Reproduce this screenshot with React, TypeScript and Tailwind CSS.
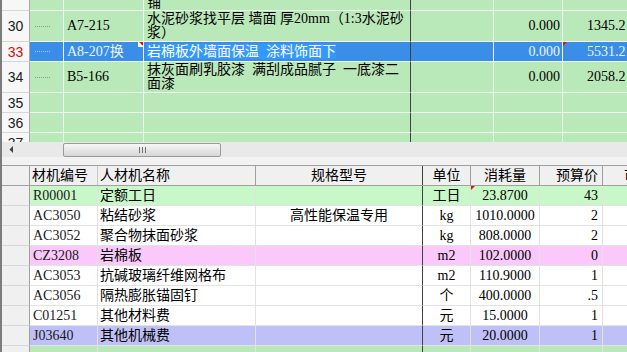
import React from 'react';

const SERIF = "font-['Liberation_Serif','Noto_Sans_CJK_SC',serif]";
const SANS = "font-['Liberation_Sans',Arial,sans-serif]";

type TopRow = {
  num?: string;
  h: string;
  code?: string;
  name?: string[];
  v1?: string;
  v2?: string;
  sel?: boolean;
  tree?: boolean;
  partialTop?: boolean;
};

const topRows: TopRow[] = [
  { h: 'h-[11px]', name: ['铺'], partialTop: true },
  { num: '30', h: 'h-[31px]', code: 'A7-215', name: ['水泥砂浆找平层\u2005墙面\u2005厚20mm（1:3水泥砂', '浆）'], v1: '0.000', v2: '1345.2', tree: true },
  { num: '33', h: 'h-[20px]', code: 'A8-207换', name: ['岩棉板外墙面保温\u2002涂料饰面下'], v1: '0.000', v2: '5531.2', sel: true, tree: true },
  { num: '34', h: 'h-[31px]', code: 'B5-166', name: ['抹灰面刷乳胶漆\u2002满刮成品腻子\u2002一底漆二', '面漆'], v1: '0.000', v2: '2058.2', tree: true },
  { num: '35', h: 'h-[20px]' },
  { num: '36', h: 'h-[20px]' },
  { num: '37', h: 'h-[20px]' },
];

type BotRow = {
  code?: string;
  name?: string;
  spec?: string;
  unit?: string;
  qty?: string;
  price?: string;
  bg: string;
  marker?: boolean;
};

const botRows: BotRow[] = [
  { code: 'R00001', name: '定额工日', unit: '工日', qty: '23.8700', price: '43', bg: 'bg-[#c8f8c8]', marker: true },
  { code: 'AC3050', name: '粘结砂浆', spec: '高性能保温专用', unit: 'kg', qty: '1010.0000', price: '2', bg: 'bg-white' },
  { code: 'AC3052', name: '聚合物抹面砂浆', unit: 'kg', qty: '808.0000', price: '2', bg: 'bg-white' },
  { code: 'CZ3208', name: '岩棉板', unit: 'm2', qty: '102.0000', price: '0', bg: 'bg-[#fac8fa]' },
  { code: 'AC3053', name: '抗碱玻璃纤维网格布', unit: 'm2', qty: '110.9000', price: '1', bg: 'bg-white' },
  { code: 'AC3056', name: '隔热膨胀锚固钉', unit: '个', qty: '400.0000', price: '.5', bg: 'bg-white' },
  { code: 'C01251', name: '其他材料费', unit: '元', qty: '15.0000', price: '1', bg: 'bg-white' },
  { code: 'J03640', name: '其他机械费', unit: '元', qty: '20.0000', price: '1', bg: 'bg-[#c0c0f8]' },
  { bg: 'bg-[#b9e8b9]' },
];

function RedMarkRight() {
  return (
    <svg className="absolute top-0 right-0" width="5" height="5" viewBox="0 0 5 5">
      <rect x="0" y="0" width="5" height="5" fill="#ffffff" />
      <polygon points="1,0 5,0 5,4" fill="#e01010" />
    </svg>
  );
}

function RedMarkLeft() {
  return (
    <svg className="absolute top-0 left-0" width="5" height="5" viewBox="0 0 5 5">
      <polygon points="0,0 4,0 0,4" fill="#e01010" />
    </svg>
  );
}

function TopGrid() {
  return (
    <div className="h-[142px] shrink-0 overflow-hidden bg-[#b9e8b9] flex flex-col">
      {topRows.map((r, i) => {
        const selBg = r.sel ? 'bg-[#3a8ee8]' : '';
        const txt = r.sel ? 'text-[#eef4ff]' : 'text-black';
        return (
          <div key={i} className={`flex shrink-0 ${r.h}`}>
            <div
              className={`w-[28px] shrink-0 border-r border-r-[#a8a8a8] border-b border-b-[#d6d6d6] bg-[#f7f7f7] flex items-center justify-center text-[14px] leading-[16px] ${SANS} ${r.sel ? 'text-[#d01010]' : 'text-[#202020]'}`}
            >
              {r.num}
            </div>
            <div className={`w-[34px] shrink-0 border-r border-b border-[#eef8ee] flex items-center ${selBg}`}>
              {r.tree && (
                <div className={`ml-[5px] w-[15px] border-t border-dotted ${r.sel ? 'border-[#a8c8f0]' : 'border-[#8a9a8a]'}`} />
              )}
            </div>
            <div className={`relative w-[80px] shrink-0 border-r border-b border-[#eef8ee] flex items-center pl-[3px] text-[14px] leading-[16px] whitespace-nowrap ${SERIF} ${txt} ${selBg}`}>
              {r.code}
              {r.sel && <RedMarkRight />}
            </div>
            <div
              className={`w-[267px] shrink-0 border-r border-r-[#404040] border-b border-b-[#eef8ee] overflow-hidden pl-[3px] text-[14px] leading-[14px] whitespace-nowrap ${SERIF} ${selBg} flex flex-col ${
                r.partialTop ? 'justify-end' : r.name && r.name.length > 1 ? 'justify-start pt-[1px]' : 'justify-center'
              }`}
            >
              {r.name &&
                r.name.map((l, j) => (
                  <div key={j} className="shrink-0">
                    {r.sel ? <span className="bg-[#3399ff] text-white">{l}</span> : <span className="text-black">{l}</span>}
                  </div>
                ))}
            </div>
            <div className={`w-[83px] shrink-0 border-r border-b border-[#eef8ee] ${selBg}`} />
            <div className={`w-[69px] shrink-0 border-r border-b border-[#eef8ee] flex items-center justify-end pr-[2px] text-[14px] leading-[16px] ${SERIF} ${txt} ${selBg}`}>
              {r.v1}
            </div>
            <div className={`relative flex-1 border-b border-[#eef8ee] flex items-center pl-[24px] text-[14px] leading-[16px] whitespace-nowrap overflow-hidden ${SERIF} ${txt} ${selBg}`}>
              {r.v2}
              {r.sel && <RedMarkLeft />}
            </div>
          </div>
        );
      })}
    </div>
  );
}

function ScrollBar() {
  return (
    <div className="h-[15px] shrink-0 bg-[#e9e9e9] flex items-stretch">
      <div className="w-[61px] shrink-0 flex items-center pl-[7px]">
        <svg width="5" height="7" viewBox="0 0 5 7">
          <polygon points="4,0 4,7 0.5,3.5" fill="#404040" />
        </svg>
      </div>
      <div className="w-[158px] shrink-0 mt-[1px] rounded-[2px] border border-[#9a9a9a] bg-gradient-to-b from-[#f7f7f7] to-[#d6d6d6] flex items-center justify-center gap-[2px]">
        <div className="w-px h-[6px] bg-[#707070]" />
        <div className="w-px h-[6px] bg-[#707070]" />
        <div className="w-px h-[6px] bg-[#707070]" />
      </div>
      <div className="flex-1" />
    </div>
  );
}

function BottomTable() {
  return (
    <div className="flex-1 overflow-hidden bg-white flex flex-col">
      <div className={`h-[21px] shrink-0 flex border-t border-b border-[#a0a0a0] bg-[#f0f0f0] text-[14px] leading-[16px] text-black ${SERIF}`}>
        <div className="w-[28px] shrink-0 border-r border-[#a0a0a0]" />
        <div className="w-[68px] shrink-0 border-r border-[#c8c8c8] flex items-center pl-[2px] whitespace-nowrap">材机编号</div>
        <div className="w-[158px] shrink-0 border-r border-[#a0a0a0] flex items-center pl-[2px] whitespace-nowrap">人材机名称</div>
        <div className="w-[167px] shrink-0 border-r border-[#404040] flex items-center justify-center whitespace-nowrap">规格型号</div>
        <div className="w-[48px] shrink-0 border-r border-[#a0a0a0] flex items-center justify-center whitespace-nowrap">单位</div>
        <div className="w-[69px] shrink-0 border-r border-[#a0a0a0] flex items-center justify-center whitespace-nowrap">消耗量</div>
        <div className="w-[63px] shrink-0 border-r border-[#a0a0a0] flex items-center justify-end pr-[4px] whitespace-nowrap">预算价</div>
        <div className="flex-1 flex items-center pl-[21px] whitespace-nowrap overflow-hidden">市场价</div>
      </div>
      {botRows.map((r, i) => (
        <div key={i} className={`h-[20px] shrink-0 flex text-[14px] leading-[16px] text-black ${SERIF}`}>
          <div className="w-[28px] shrink-0 border-r border-r-[#a0a0a0] border-b border-b-[#d8d8d8] bg-[#f0f0f0]" />
          <div className={`w-[68px] shrink-0 border-r border-b border-[#e2e2e2] flex items-center pl-[3px] whitespace-nowrap text-[#1a1a1a] ${r.bg}`}>{r.code}</div>
          <div className={`w-[158px] shrink-0 border-r border-b border-[#e2e2e2] flex items-center pl-[2px] whitespace-nowrap ${r.bg}`}>{r.name}</div>
          <div className={`w-[167px] shrink-0 border-r border-r-[#404040] border-b border-b-[#e2e2e2] flex items-center justify-center whitespace-nowrap ${r.bg}`}>{r.spec}</div>
          <div className={`w-[48px] shrink-0 border-r border-b border-[#e2e2e2] flex items-center justify-center whitespace-nowrap ${r.bg}`}>{r.unit}</div>
          <div className={`relative w-[69px] shrink-0 border-r border-b border-[#e2e2e2] flex items-center justify-center whitespace-nowrap ${r.bg}`}>
            {r.qty}
            {r.marker && <RedMarkLeft />}
          </div>
          <div className={`w-[63px] shrink-0 border-r border-b border-[#e2e2e2] flex items-center justify-end pr-[4px] whitespace-nowrap ${r.bg}`}>{r.price}</div>
          <div className={`flex-1 border-b border-[#e2e2e2] ${r.bg}`} />
        </div>
      ))}
    </div>
  );
}

export default function App() {
  return (
    <div className="w-[627px] h-[352px] overflow-hidden bg-[#f0f0f0] border-l-2 border-[#7c7c7c] flex flex-col">
      <TopGrid />
      <ScrollBar />
      <div className="h-[8px] shrink-0 bg-[#f2f2f2]" />
      <BottomTable />
    </div>
  );
}
